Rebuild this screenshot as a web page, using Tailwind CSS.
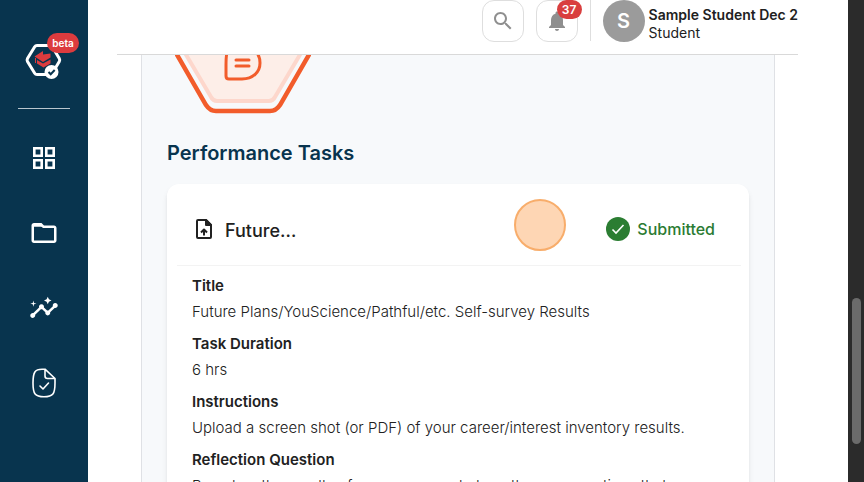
<!DOCTYPE html>
<html lang="en">
<head>
    <meta charset="UTF-8">
    <meta name="viewport" content="width=device-width, initial-scale=1.0">
    <title>Performance Tasks</title>
    <script src="https://cdn.jsdelivr.net/npm/@tailwindcss/browser@4"></script>
</head>
<body class="flex h-screen overflow-hidden bg-white font-['Inter',sans-serif] text-[#212121]">
    <!-- Sidebar -->
    <aside class="flex w-22 shrink-0 flex-col items-center bg-[#08344e] pt-10 text-white">
        <a href="#" aria-label="Home" class="relative block h-10 w-10">
            <svg class="h-10 w-10" viewBox="0 0 40 40" fill="none">
                <path d="M13 5.500h13q1.500 0 2.300 1.300l7 11.700q.8 1.500 0 3l-7 11.700q-.8 1.300-2.300 1.300H13q-1.500 0-2.300-1.300L3.500 21.500q-.8-1.500 0-3l7.200-11.700Q11.500 5.500 13 5.500z" stroke="#fff" stroke-width="3"/>
                <path d="M10.500 16.500l8.500-5.500v3.500l7.500-1v4L19 22z" fill="#dc3b3e"/>
                <path d="M13 20l6 3.500 7.500-4v4l-7 4-6.500-4z" fill="#dc3b3e"/>
                <path d="M11.500 18v5" stroke="#dc3b3e"/>
                <circle cx="27.500" cy="32" r="7" fill="#fff"/>
                <path d="M24.500 32l2.200 2.200 4-4.200" stroke="#08344e" stroke-width="2"/>
            </svg>
            <span class="absolute -top-[7px] left-[23px] flex h-5 w-8 items-center justify-center rounded-full bg-[#dc3b3e] text-[10px] font-semibold">beta</span>
        </a>
        <hr class="mt-7 w-13 border-[#b9c6ce]">
        <nav class="mt-[34px] flex flex-col items-center gap-[45px]">
            <a href="#" aria-label="Dashboard">
                <svg class="h-[30px] w-[30px]" viewBox="0 0 30 30" fill="none" stroke="#fff" stroke-width="2.600">
                    <path d="M5.300 5.300h7.400v7.400H5.300zM17.300 5.300h7.400v7.400h-7.400zM5.300 17.300h7.400v7.400H5.300zM17.300 17.300h7.400v7.400h-7.400z"/>
                </svg>
            </a>
            <a href="#" aria-label="Portfolio">
                <svg class="h-[30px] w-[30px]" viewBox="0 0 24 24" fill="#fff">
                    <path d="M9.170 6l2 2H20v10H4V6h5.170M10 4H4c-1.100 0-1.990.9-1.990 2L2 18c0 1.100.9 2 2 2h16c1.100 0 2-.9 2-2V8c0-1.100-.9-2-2-2h-8z"/>
                    <path d="M3 5h7l2 2H3z"/>
                </svg>
            </a>
            <a href="#" aria-label="Insights">
                <svg class="h-[30px] w-[30px]" viewBox="0 0 24 24" fill="#fff">
                    <path d="M21 8c-1.450 0-2.260 1.440-1.930 2.510l-3.550 3.560c-.3-.09-.74-.09-1.040 0l-2.550-2.550C12.270 10.450 11.460 9 10 9c-1.450 0-2.270 1.440-1.930 2.520l-4.560 4.550C2.440 15.740 1 16.550 1 18c0 1.100.9 2 2 2 1.450 0 2.260-1.440 1.930-2.510l4.550-4.560c.3.09.74.09 1.040 0l2.550 2.550C12.730 16.550 13.540 18 15 18c1.450 0 2.270-1.440 1.930-2.520l3.560-3.550C21.560 12.260 23 11.450 23 10c0-1.100-.9-2-2-2z"/>
                    <path d="M15 9l.94-2.070L18 6l-2.060-.93L15 3l-.92 2.070L12 6l2.080.93zM3.500 11L4 9l2-.5L4 8l-.5-2L3 8l-2 .5L3 9z"/>
                </svg>
            </a>
            <a href="#" aria-label="Completed documents">
                <svg class="h-[30px] w-[30px]" viewBox="0 0 30 30" fill="none" stroke="#fff" stroke-width="1.600" stroke-linejoin="round" stroke-linecap="round">
                    <path d="M16 1.200h-3C6 1.200 4 4 4 15s2 13.800 11 13.800S26 26 26 15v-4.500zM16 1.200V8q0 2.500 2.500 2.500H26M11 18l3 3 5.500-6"/>
                </svg>
            </a>
        </nav>
    </aside>

    <div class="flex min-w-0 flex-1 flex-col">
        <!-- Top bar -->
        <header class="mr-[50px] ml-[29px] flex h-[55px] shrink-0 items-start justify-end border-b border-[#d9d9d9]">
            <button aria-label="Search" class="flex h-[42px] w-[42px] items-center justify-center rounded-xl border border-[#dedede]">
                <svg class="h-6 w-6" viewBox="0 0 24 24" fill="#8f8f8f">
                    <path d="M15.500 14h-.79l-.28-.27C15.410 12.590 16 11.110 16 9.500 16 5.910 13.090 3 9.500 3S3 5.910 3 9.500 5.910 16 9.500 16c1.610 0 3.090-.59 4.230-1.570l.27.28v.79l5 4.990L20.490 19zm-6 0C7.010 14 5 11.990 5 9.500S7.010 5 9.500 5 14 7.010 14 9.500 11.990 14 9.500 14z"/>
                </svg>
            </button>
            <button aria-label="Notifications" class="relative ml-3 flex h-[42px] w-[42px] items-center justify-center rounded-xl border border-[#dedede]">
                <svg class="h-6 w-6" viewBox="0 0 24 24" fill="#8f8f8f">
                    <path d="M12 22c1.100 0 2-.9 2-2h-4c0 1.100.89 2 2 2zm6-6v-5c0-3.070-1.640-5.640-4.500-6.320V4c0-.83-.67-1.500-1.500-1.500s-1.500.67-1.500 1.500v.68C7.630 5.360 6 7.920 6 11v5l-2 2v1h16v-1z"/>
                </svg>
                <span class="absolute -top-px left-5 flex h-[19px] w-[25px] items-center justify-center rounded-full bg-[#d93f3f] text-xs font-semibold text-white">37</span>
            </button>
            <div class="ml-3 h-[41px] w-px bg-[#dedede]"></div>
            <div class="ml-3 flex items-center gap-1">
                <div class="flex h-[42px] w-[42px] items-center justify-center rounded-full bg-[#9b9b9b] text-xl font-semibold text-white">S</div>
                <div class="mt-1.5 text-sm leading-[18px] whitespace-nowrap">
                    <p class="font-semibold">Sample Student Dec 2</p>
                    <p>Student</p>
                </div>
            </div>
        </header>

        <!-- Scrolled content -->
        <main class="mr-[73px] ml-[53px] min-h-0 flex-1 overflow-hidden border-x border-[#dfe1e5] bg-[#f7f9fb] px-[25px]">
            <svg class="ml-2 h-[60px] w-[136px]" viewBox="0 0 136 60" fill="none">
                <path d="M10 -2L36 42Q38 46 42 46H94Q98 46 100 42L126 -2" fill="#fdeee8" stroke="#fdd7cc" stroke-width="4"/>
                <path d="M1 -2L31 50Q35 56 41 56H95Q101 56 105 50L135 -2" stroke="#f25c2b" stroke-width="4.500"/>
                <path d="M52 -2C51 1 51 5 51 10V21Q51 24 54 24H67C78 24 85 17 85 8Q85 2 82 -2M61 5h13M61 11h13" stroke="#f25c2b" stroke-width="3" stroke-linecap="round"/>
            </svg>
            <h2 class="mt-6 text-xl leading-7 font-semibold text-[#08344e]">Performance Tasks</h2>

            <section class="mt-[17px] rounded-xl bg-white pb-6 shadow-md">
                <div class="relative mr-2 ml-[10px] flex h-[82px] items-center justify-between border-b border-[#f3f3f3] pr-[26px] pl-[15px]">
                    <div class="mt-3 flex items-start gap-[9px]">
                        <svg class="h-6 w-6" viewBox="0 0 24 24" fill="none" stroke="#212121" stroke-width="2" stroke-linejoin="round">
                            <path d="M14 3H6Q5 3 5 4v16q0 1 1 1h12q1 0 1-1V8z"/>
                            <path d="M14 3v5h5z" fill="#212121"/>
                            <path d="M12 18.500v-6M9 15.500l3-3 3 3"/>
                        </svg>
                        <h3 class="text-lg leading-7 font-medium">Future…</h3>
                    </div>
                    <div class="mt-2 flex items-center gap-[7px] font-medium text-[#2b7b32]">
                        <svg class="h-6 w-6" viewBox="0 0 24 24" fill="none">
                            <circle cx="12" cy="12" r="12" fill="#2b7d32"/>
                            <path d="M6.500 12.500l3.500 3.500 7.500-8" stroke="#fff" stroke-width="1.600"/>
                        </svg>
                        Submitted
                    </div>
                    <!-- Click marker -->
                    <span class="absolute top-[15px] right-[175px] h-[52px] w-[52px] rounded-full border-2 border-[#f8ad6b] bg-[#fed6b4]"></span>
                </div>
                <dl class="px-[25px] pt-[7px] text-[15px] leading-[26px]">
                    <dt class="font-semibold">Title</dt>
                    <dd class="mb-1.5 font-light">Future Plans/YouScience/Pathful/etc. Self-survey Results</dd>
                    <dt class="font-semibold">Task Duration</dt>
                    <dd class="mb-1.5 font-light">6 hrs</dd>
                    <dt class="font-semibold">Instructions</dt>
                    <dd class="mb-1.5 font-light">Upload a screen shot (or PDF) of your career/interest inventory results.</dd>
                    <dt class="font-semibold">Reflection Question</dt>
                    <dd class="font-light">Based on the results of your survey, what are three occupations that you</dd>
                </dl>
            </section>
        </main>
    </div>

    <!-- Scrollbar -->
    <div class="w-4 shrink-0 bg-[#2b2b2b] px-1 pt-[298px]">
        <div class="h-[146px] w-[9px] rounded-full bg-[#6b6b6b]"></div>
    </div>
</body>
</html>
